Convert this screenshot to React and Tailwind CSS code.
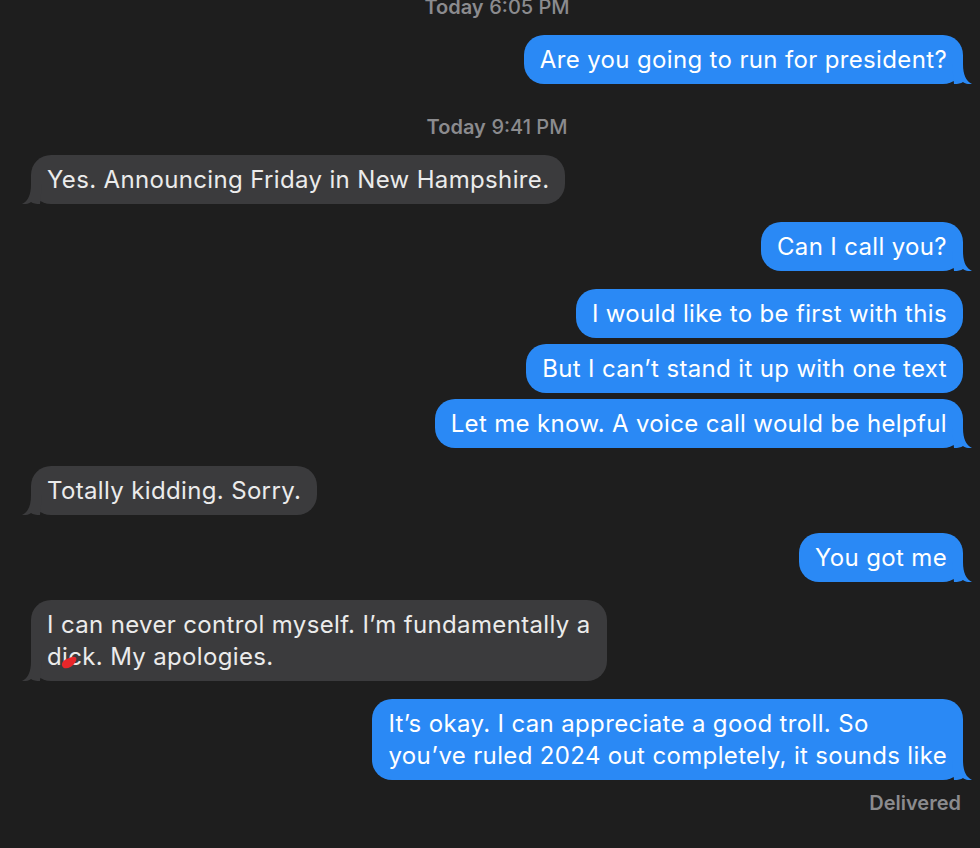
import React from 'react';

const BLUE = '#2a89f5';
const GRAY = '#3b3b3d';

function Tail({ me }) {
  return (
    <svg
      viewBox="0 0 20 20"
      className={me ? 'absolute bottom-0 right-[-9px] h-5 w-5' : 'absolute bottom-0 left-[-9px] h-5 w-5 -scale-x-100'}
    >
      <path d="M0 0H11C11 11 14 17 20 20C16 20.5 13 19.5 11 18C9 19.5 6 20 2 20Z" fill={me ? BLUE : GRAY} />
    </svg>
  );
}

function Bubble({ me, tail, className, children, extra }) {
  return (
    <div className={`flex ${me ? 'justify-end' : 'justify-start'} ${className}`}>
      <div
        className={`relative whitespace-nowrap rounded-[20px] px-4 py-[8.5px] text-[24px] leading-[32px] tracking-[0.35px] ${
          me ? 'bg-[#2a89f5] text-white' : 'bg-[#3b3b3d] text-[#ebebeb]'
        }`}
      >
        {children}
        {tail && <Tail me={me} />}
        {extra}
      </div>
    </div>
  );
}

function Stamp({ day, time, className }) {
  return (
    <div className={`text-center text-[20px] leading-5 text-[#8b8b8e] ${className}`}>
      <span className="font-semibold">{day}</span> <span className="font-medium">{time}</span>
    </div>
  );
}

// red scribble over the word on the screenshot
function RedMark() {
  return (
    <svg viewBox="0 0 16 16" className="absolute left-[30px] top-[54px] h-4 w-4">
      <path d="M1 11.5C0.5 8.5 3 5.5 7 4.5C10 3.5 13 2 15 3.5C16.5 6 13.5 10.5 9.5 13C6 15 2 15 1 11.5Z" fill="#e8262a" />
    </svg>
  );
}

export default function App() {
  return (
    <div className="h-[848px] overflow-hidden bg-[#1e1e1e] pl-[31px] pr-[17px] font-['Inter',sans-serif]">
      <Stamp day="Today" time="6:05 PM" className="-mt-[3px]" />
      <Bubble me tail className="mt-[18px]">Are you going to run for president?</Bubble>

      <Stamp day="Today" time="9:41 PM" className="mt-[33px]" />
      <Bubble tail className="mt-[18px]">Yes. Announcing Friday in New Hampshire.</Bubble>

      <Bubble me tail className="mt-[18px]">Can I call you?</Bubble>
      <Bubble me className="mt-[18px]">I would like to be first with this</Bubble>
      <Bubble me className="mt-[6px]">But I can’t stand it up with one text</Bubble>
      <Bubble me tail className="mt-[6px]">Let me know. A voice call would be helpful</Bubble>

      <Bubble tail className="mt-[18px]">Totally kidding. Sorry.</Bubble>
      <Bubble me tail className="mt-[18px]">You got me</Bubble>

      <Bubble tail className="mt-[18px]" extra={<RedMark />}>
        I can never control myself. I’m fundamentally a
        <br />
        dick. My apologies.
      </Bubble>

      <Bubble me tail className="mt-[18px]">
        It’s okay. I can appreciate a good troll. So
        <br />
        you’ve ruled 2024 out completely, it sounds like
      </Bubble>

      <div className="mt-[11px] pr-[2px] text-right text-[20px] font-semibold leading-6 text-[#8b8b8e]">Delivered</div>
    </div>
  );
}
